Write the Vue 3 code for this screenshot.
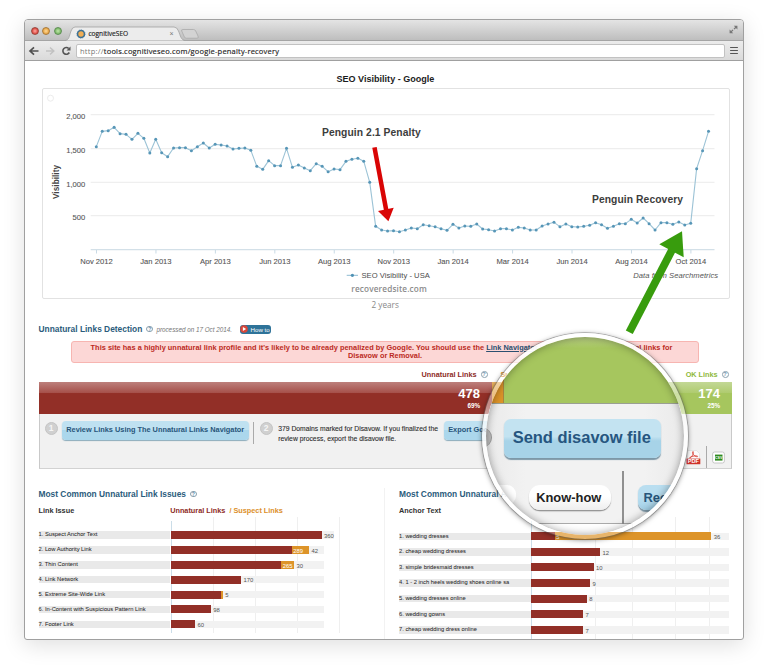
<script setup>
// Visibility samples, measured downward in thirds of a pixel inside the plot.
const samples = [
  260, 214, 212, 202, 221, 223, 238, 220, 235, 279, 238, 278, 290, 264, 263, 263, 272, 260, 249, 264,
  253, 255, 258, 267, 265, 264, 271, 319, 328, 302, 317, 317, 265, 322, 315, 324, 332, 311, 319, 335,
  327, 329, 304, 298, 295, 304, 367, 499, 510, 513, 512, 515, 510, 504, 506, 494, 497, 500, 506, 511,
  493, 504, 498, 499, 492, 507, 509, 513, 506, 506, 510, 502, 504, 510, 510, 498, 492, 487, 500, 492,
  500, 501, 499, 496, 488, 494, 505, 499, 491, 491, 478, 489, 474, 491, 510, 488, 488, 493, 486, 495,
  490, 326, 272, 214
]
const points = samples.map((v, i) => ({ x: +(96.3 + i * 5.944).toFixed(2), y: +(60 + v / 3).toFixed(2) }))
const line = points.map(p => `${p.x},${p.y}`).join(' ')

const months = ['Nov 2012', 'Jan 2013', 'Apr 2013', 'Jun 2013', 'Aug 2013', 'Nov 2013', 'Jan 2014', 'Mar 2014', 'Jun 2014', 'Aug 2014', 'Oct 2014']
const ticks = months.map((label, i) => ({ label, x: 96.5 + i * 59.44 }))
const levels = [
  { label: '2,000', y: 114.7 },
  { label: '1,500', y: 148.7 },
  { label: '1,000', y: 182.3 },
  { label: '500', y: 215.7 }
]

const issues = [
  { name: '1. Suspect Anchor Text', bad: 151, value: '360' },
  { name: '2. Low Authority Link', bad: 121, sus: 17.5, inner: '289', value: '42' },
  { name: '3. Thin Content', bad: 110.5, sus: 13, inner: '265', value: '30' },
  { name: '4. Link Network', bad: 70.7, value: '170' },
  { name: '5. Extreme Site-Wide Link', bad: 50, sus: 2.3, value: '5' },
  { name: '6. In-Content with Suspicious Pattern Link', bad: 40.3, value: '98' },
  { name: '7. Footer Link', bad: 24.5, value: '60' }
]
const anchors = [
  { name: '1. wedding dresses', bad: 23.5, sus: 156.8, inner: '5', value: '36' },
  { name: '2. cheap wedding dresses', bad: 69, value: '12' },
  { name: '3. simple bridesmaid dresses', bad: 62.7, value: '10' },
  { name: '4. 1 - 2 inch heels wedding shoes online sa', bad: 59, value: '9' },
  { name: '5. wedding dresses online', bad: 55.8, value: '8' },
  { name: '6. wedding gowns', bad: 52, value: '7' },
  { name: '7. cheap wedding dress online', bad: 52, value: '7' }
]
const tables = [
  { key: 'issues', title: 'Most Common Unnatural Link Issues', column: 'Link Issue', legend: true, rows: issues, grid: [0, 42, 84, 126, 168] },
  { key: 'anchors', title: 'Most Common Unnatural A', column: 'Anchor Text', legend: false, rows: anchors, grid: [0, 63.5, 101, 144, 177.7] }
]
</script>

<template>
  <div class="page">
    <div class="window">
      <header class="titlebar">
        <div class="lights"><i class="red"></i><i class="amber"></i><i class="green"></i></div>
        <div class="tab">
          <svg class="tab-shape" width="136" height="15" viewBox="0 0 136 15">
            <path d="M0 14.5C4 14 4 11 6 5Q7.300 1 10 1H109Q112 1 113.500 5C115.500 10 116 14 120 14.500" fill="#ececec" stroke="#a2a2a2" stroke-width=".8" />
            <path d="M118 3.500H128.500Q130 3.500 130.700 5L133 10Q134 12.200 132 12.200H121.500Q120 12.200 119.400 11L116.700 5Q116 3.500 118 3.500Z" fill="#d3d3d3" stroke="#a9a9a9" stroke-width=".8" />
          </svg>
          <svg class="favicon" width="10" height="10" viewBox="0 0 10 10">
            <circle cx="5" cy="5" r="3.500" fill="#f0ad55" stroke="#3a6f93" stroke-width="1.600" />
            <circle cx="5" cy="5" r="4.300" fill="none" stroke="#6b98b5" stroke-width=".6" stroke-dasharray="1 1.200" />
          </svg>
          <span class="tab-title">cognitiveSEO</span>
          <span class="tab-close">×</span>
        </div>
        <svg class="expand" width="9" height="9" viewBox="0 0 9 9" fill="#777" stroke="#777">
          <path d="M4.800 .8H8.400V4.400ZM.6 4.600V8.200H4.200Z" stroke="none" />
          <path d="M5 4.100L7.200 2M1.800 7.100L4 4.900" stroke-width="1.300" />
        </svg>
      </header>
      <div class="toolbar">
        <svg class="nav" width="48" height="12" viewBox="0 0 48 12" fill="none">
          <path d="M7 2.300L3 6L7 9.700M3.500 6H11.500" stroke="#505050" stroke-width="1.700" />
          <path d="M23 2.500L26.800 6L23 9.500M26.300 6H19" stroke="#c2c2c2" stroke-width="1.500" />
          <path d="M41.700 3.500A3.400 3.400 0 1 0 42.300 7.500" stroke="#555" stroke-width="1.600" />
          <path d="M43.500 1.500V5.500H39.500Z" fill="#555" />
        </svg>
        <div class="address"><span class="scheme">http://</span><span>tools.cognitiveseo.com/google-penalty-recovery</span></div>
        <div class="burger"><i></i><i></i><i></i></div>
      </div>

      <main>
        <h1>SEO Visibility - Google</h1>
        <figure>
          <svg class="chart" width="686" height="209" viewBox="43 89 686 209">
            <circle cx="50.500" cy="98.200" r="3" fill="none" stroke="#ececec" />
            <g v-for="l in levels" :key="l.label">
              <line x1="90.700" x2="714.500" :y1="l.y" :y2="l.y" stroke="#ebebeb" />
              <text x="85.200" :y="l.y + 4.300" text-anchor="end" class="axis">{{ l.label }}</text>
            </g>
            <line x1="90.700" x2="714.500" y1="249.700" y2="249.700" stroke="#d3e0e8" stroke-width="1.200" />
            <g v-for="t in ticks" :key="t.label">
              <line :x1="t.x" :x2="t.x" y1="250" y2="253.500" stroke="#c3d6e2" stroke-width=".9" />
              <text :x="t.x" y="263.700" text-anchor="middle" class="axis">{{ t.label }}</text>
            </g>
            <text transform="translate(59.300 182) rotate(-90)" text-anchor="middle" class="axis-title" textLength="34">Visibility</text>
            <polyline :points="line" fill="none" stroke="#9cc3d6" stroke-width="1.100" stroke-linejoin="round" />
            <circle v-for="(p, i) in points" :key="i" :cx="p.x" :cy="p.y" r="1.500" fill="#5796b7" />
            <text x="322" y="135.700" class="note" textLength="98.700">Penguin 2.1 Penalty</text>
            <text x="592" y="203" class="note" textLength="91">Penguin Recovery</text>
            <path d="M346.700 275.300H358" stroke="#8dbbd1" /><circle cx="352.400" cy="275.300" r="1.600" fill="#4f91b4" />
            <text x="361.500" y="278" class="legend" textLength="68.300">SEO Visibility - USA</text>
            <text x="351.300" y="291.800" class="site" textLength="75.500">recoveredsite.com</text>
            <text x="633.300" y="277.800" class="source" textLength="84.700">Data from Searchmetrics</text>
            <path d="M374.500 147.300L386.200 210" stroke="#d90505" stroke-width="4.500" />
            <path d="M378 211L393.700 207.700L388.400 221.200Z" fill="#d90505" />
            <path d="M629.300 332.300L672 250" stroke="#389c0d" stroke-width="7.800" />
            <path d="M659.300 244.300L683.700 257.300L682 231.200Z" fill="#389c0d" />
          </svg>
        </figure>
        <p class="range">2 years</p>

        <div class="detect-head">
          <h2>Unnatural Links Detection</h2>
          <span class="help">?</span>
          <em>processed on 17 Oct 2014.</em>
          <span class="howto"><svg width="8" height="8" viewBox="0 0 8 8"><circle cx="4" cy="4" r="3.800" fill="#d8473a" /><path d="M2.900 2.100L6.100 4L2.900 5.900Z" fill="#fff" /></svg>How to</span>
        </div>
        <div class="alert">
          <p>This site has a highly unnatural link profile and it's likely to be already penalized by Google. You should use the <a>Link Navigator</a> in order to find the unnatural links for</p>
          <p>Disavow or Removal.</p>
        </div>
        <div class="labels">
          <div class="label-bad">Unnatural Links <span class="help">?</span></div>
          <div class="label-sus">Suspect</div>
          <div class="label-ok">OK Links <span class="help">?</span></div>
        </div>
        <div class="split">
          <div class="seg bad"><b>478</b><small>69%</small></div>
          <div class="seg sus"></div>
          <div class="seg ok"><b>174</b><small>25%</small></div>
        </div>
        <div class="steps">
          <span class="step">1</span>
          <button class="review">Review Links Using The Unnatural Links Navigator</button>
          <i class="rule"></i>
          <span class="step two">2</span>
          <p>379 Domains marked for Disavow. If you finalized the<br>review process, export the disavow file.</p>
          <button class="export">Export Google</button>
          <div class="downloads">
            <svg width="15" height="15" viewBox="0 0 15 15">
              <path d="M1.500 .5H10.500L13.500 3.500V14H1.500Z" fill="#fbfbfb" stroke="#ddd" stroke-width=".7" />
              <path d="M7 1.500C5.500 3 8.500 7 11.500 6.700C13 5.500 5 5.500 3.500 8C4.500 8.800 8.500 3.500 7 1.500Z" fill="none" stroke="#d8443a" stroke-width=".9" />
              <rect x=".5" y="8.600" width="13.800" height="5.600" fill="#cf3229" />
              <text x="7.400" y="13.100" text-anchor="middle" class="badge">PDF</text>
            </svg>
            <i class="rule"></i>
            <svg width="13" height="13" viewBox="0 0 13 13">
              <rect x=".6" y="1" width="11.800" height="11" rx="2" fill="#fff" stroke="#bbb" stroke-width=".8" />
              <rect x="3" y="3.600" width="7.500" height="6" fill="#2f8a1e" />
              <text x="6.700" y="7.900" text-anchor="middle" class="badge small">CSV</text>
            </svg>
          </div>
        </div>

        <div class="tables">
          <section v-for="t in tables" :key="t.key" :class="t.key">
            <h2>{{ t.title }} <span v-if="t.legend" class="help">?</span></h2>
            <div class="cols">
              <h3>{{ t.column }}</h3>
              <h3 v-if="t.legend" class="bad-text">Unnatural Links <span class="sus-text">&nbsp;/ Suspect Links</span></h3>
            </div>
            <div class="rows">
              <div class="grid-lines"><i v-for="g in t.grid" :key="g" :style="{ left: g + 'px' }"></i></div>
              <div v-for="r in t.rows" :key="r.name" class="row">
                <span class="name">{{ r.name }}</span>
                <div class="track">
                  <div class="bar" :style="{ width: r.bad + 'px' }"></div>
                  <div v-if="r.sus" class="bar orange" :class="{ labelled: r.inner }" :style="{ width: r.sus + 'px' }">{{ r.inner }}</div>
                  <span class="value">{{ r.value }}</span>
                </div>
              </div>
            </div>
          </section>
        </div>
      </main>
    </div>

    <div class="lens">
      <div class="glass">
        <div class="lens-bar"><i></i><b></b></div>
        <div class="lens-panel">
          <span class="lens-step"></span>
          <button class="send">Send disavow file</button>
          <div class="lens-row">
            <span class="stub"></span>
            <button class="know">Know-how</button>
            <i></i>
            <button class="rec">Rec</button>
          </div>
        </div>
      </div>
    </div>
  </div>
</template>

<style>
body { margin: 0; background: #fff; }
</style>

<style scoped>
* { box-sizing: border-box; }
h1, h2, h3, p, figure { margin: 0; }
button { border: 0; padding: 0; font-family: inherit; white-space: nowrap; }
.page { position: relative; width: 768px; height: 669px; padding: 19px 24px 0; overflow: hidden; font-family: "Liberation Sans", Arial, sans-serif; white-space: nowrap; background: #fff; }
.window { width: 720px; height: 621px; border: 1px solid #a0a0a0; border-radius: 4px 4px 3px 3px; background: #fff; box-shadow: 0 5px 22px rgba(0, 0, 0, .13); }

.titlebar { display: flex; align-items: flex-start; height: 21px; border-bottom: 1px solid #a5a5a5; border-radius: 3px 3px 0 0; background: linear-gradient(#e4e4e4, #bebebe); }
.lights { display: flex; gap: 3.400px; padding: 6.500px 0 0 5.800px; width: 41px; }
.lights i { flex: none; width: 8px; height: 8px; border-radius: 50%; border: 1px solid #9a4a40; background: radial-gradient(#fa9b93 10%, #d93c34 75%); }
.lights .amber { border-color: #a87a3c; background: radial-gradient(#fbd28c 10%, #e6a13c 75%); }
.lights .green { border-color: #5f8f55; background: radial-gradient(#b6e0a0 10%, #74b460 75%); }
.tab { position: relative; display: flex; align-items: center; height: 15px; width: 140px; margin-top: 6px; padding-left: 10px; }
.tab-shape { position: absolute; left: -1px; top: 0; }
.favicon { position: relative; }
.tab-title { position: relative; margin-left: 2.400px; width: 81px; font: 6.600px "Open Sans", sans-serif; color: #222; -webkit-text-stroke: .15px #222; }
.tab-close { position: relative; font-size: 7px; line-height: 8px; color: #777; }
.expand { margin: 5px 5px 0 auto; }
.toolbar { display: flex; align-items: center; height: 20px; border-bottom: 1px solid #a0a0a0; background: linear-gradient(#ececec, #dadada); padding-left: 2px; }
.address { width: 649px; height: 14px; margin-left: .5px; padding-left: 3.500px; border: 1px solid #c2c2c2; border-radius: 2px; background: #fff; font: 7.500px/12px "Open Sans", sans-serif; color: #222; letter-spacing: .19px; -webkit-text-stroke: .15px #222; }
.scheme { color: #777; -webkit-text-stroke: 0; letter-spacing: .26px; }
.burger { display: flex; flex-direction: column; gap: 1.300px; margin-left: 5.500px; width: 7.500px; }
.burger i { height: 1.700px; background: #555; border-radius: 1px; }

main { padding-left: 13.500px; }
h1 { height: 27px; line-height: 36px; padding-left: 298px; font-size: 9.050px; color: #1c1c1c; }
figure { width: 688px; height: 211px; margin-left: 3.500px; border: 1px solid #e2e2e2; border-radius: 2px; }
.chart { display: block; overflow: visible; position: relative; z-index: 1; }
.axis { font-size: 7.600px; fill: #555; stroke: #555; stroke-width: .1px; }
.axis-title { font-size: 8.200px; font-weight: bold; fill: #444; }
.note { font-size: 10.300px; font-weight: bold; fill: #3d3d3d; }
.legend { font-size: 7.600px; fill: #4c4c4c; }
.site { font: 600 8.200px "Open Sans", sans-serif; fill: #8b8b8b; }
.source { font-size: 7.600px; font-style: italic; fill: #555; }
.range { height: 12px; padding-left: 333px; font: 8.200px/12px "Open Sans", sans-serif; color: #888; }

h2 { font-size: 8.400px; line-height: 12px; color: #2b5c7c; }
.help { display: inline-block; width: 6.800px; height: 6.800px; border: .8px solid #8aa0ad; border-radius: 50%; font-size: 5px; line-height: 5.200px; font-weight: bold; text-align: center; color: #5a89a8; vertical-align: 1px; }
.detect-head { display: flex; align-items: center; height: 13px; margin-top: 11.500px; }
.detect-head .help { margin-left: 4px; }
.detect-head em { margin-left: 3.300px; font-size: 6.300px; color: #777; }
.howto { display: flex; align-items: center; gap: 2.500px; width: 31.500px; height: 9px; margin-left: 7.500px; padding-left: .5px; border-radius: 3px; background: #2e7399; color: #fff; font-size: 6.200px; line-height: 9px; }
.alert { width: 628px; height: 22px; margin: 5.500px 0 0 32.500px; padding-top: 1.500px; border: 1.500px solid #f7b5b1; border-radius: 3px; background: #fcd7d6; font-size: 7.360px; font-weight: bold; line-height: 8.300px; color: #bb2a22; text-align: center; }
.alert p:first-child { margin-left: -7px; letter-spacing: .034px; }
.alert a { color: #2b4f70; text-decoration: underline; }
.labels { display: flex; height: 19px; padding-top: 6px; font-size: 7.300px; font-weight: bold; line-height: 12px; }
.labels .help { margin-left: 2px; }
.label-bad { width: 449px; text-align: right; color: #8d2b25; }
.label-sus { width: 40px; margin-left: 13px; color: #dc8f2a; }
.label-ok { width: 188px; text-align: right; color: #8fb93c; }
.split { display: flex; width: 693px; height: 32px; }
.seg { display: flex; flex-direction: column; align-items: flex-end; padding: 5px 11.500px 0 0; color: #fff; }
.seg b { font-size: 13px; line-height: 14px; }
.seg small { font-size: 6.300px; line-height: 9px; font-weight: bold; }
.seg.bad { width: 453px; background: linear-gradient(#bd807c 0, #a6504a 34%, #922f27 36%, #922f27); }
.seg.sus { width: 42px; background: linear-gradient(#e8b468, #dd9429 36%); }
.seg.ok { flex: 1; background: linear-gradient(#c3d896 0, #afcb6f 34%, #a6c65e 36%); }
.steps { display: flex; width: 693.500px; height: 54.500px; padding: 4px 0 0 5px; border: 1px solid #c9c9c9; border-top: 0; background: #f1f1f1; border-bottom-color: #d2d2d2; }
.step { width: 13px; height: 13px; margin-top: 4px; border-radius: 50%; border: 1.500px solid #c4c4c4; background: #d0d0d0; color: #f5f5f5; font-size: 8.500px; line-height: 10px; text-align: center; font-weight: bold; }
.review, .export { height: 18.500px; margin-top: 3px; border-radius: 4px; background: linear-gradient(#bfe1f1 45%, #abd7ec 50%); box-shadow: 0 1px 1px #8babbb; color: #28557a; font-size: 7.360px; font-weight: bold; line-height: 16px; }
.review { width: 186.500px; margin-left: 4.500px; }
.rule { display: block; width: 1px; height: 22.500px; background: #aaa; }
.steps > .rule { margin: 3.500px 0 0 4.800px; }
.step.two { margin-left: 5.400px; }
.steps p { width: 165.500px; margin: 5.500px 0 0 5.500px; font-size: 6.790px; line-height: 10.400px; color: #2c2c2c; -webkit-text-stroke: .1px #2c2c2c; }
.export { width: 70px; padding-left: 4.500px; text-align: left; }
.downloads { display: flex; align-items: center; gap: 5px; margin: 28px 0 0 172px; height: 22px; }
.badge { font-size: 5.600px; font-weight: bold; fill: #fff; }
.badge.small { font-size: 3.600px; }

.tables { display: flex; padding-top: 19px; }
.issues { width: 346.500px; height: 151px; border-right: 1px solid #f2f2f2; }
.anchors { padding-left: 14px; }
h2 .help { margin-left: 1.500px; }
.cols { display: flex; margin-top: 5px; }
h3 { width: 131.700px; font-size: 7.300px; line-height: 12px; color: #333; }
.bad-text { color: #8d2b25; }
.sus-text { color: #dc8f2a; }
.rows { position: relative; padding-top: 11.200px; }
.grid-lines { position: absolute; left: 132px; top: 0; bottom: -1px; }
.grid-lines i { position: absolute; top: 0; bottom: 0; width: 1px; background: #efefef; }
.grid-lines i:first-child { background: #cbdde8; top: 4px; }
.row { position: relative; display: flex; align-items: center; width: 285.500px; height: 14.870px; }
.anchors .rows { padding-top: 12px; }
.anchors .row { width: 330px; height: 15.600px; }
.name { flex: none; width: 131.500px; height: 7.500px; background: #e9e9e9; font-size: 5.780px; line-height: 7.300px; color: #2a2a2a; -webkit-text-stroke: .04px #2a2a2a; }
.track { display: flex; align-items: center; flex: 1; height: 7.500px; margin-left: .7px; background: #f2f2f2; }
.bar { flex: none; height: 8px; background: #922f27; }
.bar.orange { background: #dd9429; color: #fff; font-size: 5.800px; line-height: 10px; }
.bar.labelled { padding-left: 1.500px; }
.value { margin-left: 2.200px; padding-top: 2.500px; font-size: 5.900px; line-height: 7px; color: #555; }

.lens { position: absolute; z-index: 3; left: 482px; top: 333px; width: 206px; height: 206px; padding: 4px; border-radius: 50%; background: linear-gradient(rgba(255, 255, 255, .95) 10%, rgba(255, 255, 255, .4) 19%, rgba(255, 255, 255, .45) 35%, rgba(255, 255, 255, .85) 50%, rgba(255, 255, 255, .9) 88%, rgba(255, 255, 255, .3) 97%); box-shadow: 0 0 0 .8px rgba(110, 110, 110, .5), 0 1px 5px rgba(0, 0, 0, .5); }
.glass { position: relative; width: 198px; height: 198px; border-radius: 50%; overflow: hidden; background: #fff; }
.glass::after { content: ""; position: absolute; inset: 0; border-radius: 50%; box-shadow: inset 0 0 9px rgba(0, 0, 0, .38); }
.lens-bar { display: flex; height: 67px; border-bottom: 1px solid #9a9f93; }
.lens-bar i { width: 17.500px; background: #dd9429; border-right: 1px solid #a9853f; }
.lens-bar b { flex: 1; background: linear-gradient(#b7cd82, #acca6a 12%, #a6c65e 17%); }
.lens-panel { position: relative; height: 120px; padding: 15px 0 0 18px; border-bottom: 1px solid #aaa; background: linear-gradient(90deg, #eaeaea, #f2f2f2 20%, #f2f2f2 80%, #eaeaea); }
.lens-step { position: absolute; left: -12px; top: 24px; width: 18px; height: 19px; border-radius: 50%; background: #bcbcbc; border-right: 1px solid #999; }
.send, .know, .rec { display: block; font-weight: bold; }
.send { width: 157px; height: 39px; padding-right: 1.500px; border-radius: 7px; background: linear-gradient(#c3e3f1 45%, #a7d3e8 56%); box-shadow: 0 1.300px 1px #7d98a8; color: #265680; font-size: 16.480px; line-height: 36px; padding-bottom: 3px; }
.lens-row { display: flex; margin: 13px 0 0 -18px; height: 53px; align-items: flex-start; }
.stub, .know, .rec { margin-top: 14px; height: 25px; }
.stub { flex: none; width: 30px; height: 20px; border-radius: 0 9px 9px 0; background: #fff; }
.know { flex: none; width: 81.500px; margin-left: 13px; padding-right: 2px; border-radius: 11px; background: linear-gradient(#fff 45%, #eee); box-shadow: 0 1.300px 1px #909090; font-size: 12.900px; line-height: 25px; color: #222; }
.lens-row i { flex: none; width: 1.500px; height: 53px; margin-left: 11.500px; background: #909090; }
.rec { flex: none; width: 80px; margin-left: 14.500px; padding-left: 5.500px; text-align: left; border-radius: 8px; background: linear-gradient(#b9def0 50%, #a2d0e7); box-shadow: 0 1.300px 1px #7d98a8; font-size: 12.900px; line-height: 25px; color: #28557a; }
</style>
